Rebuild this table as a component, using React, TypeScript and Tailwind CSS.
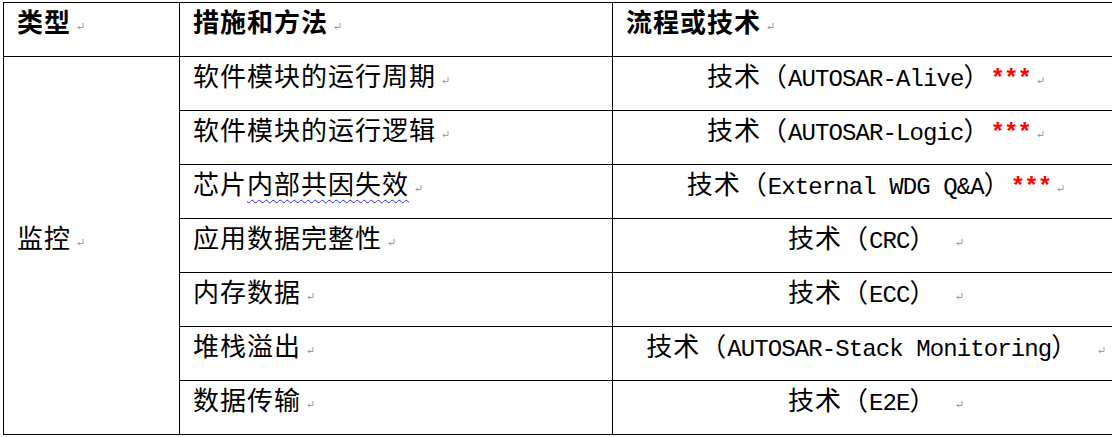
import React from 'react';

interface Row {
  measure: string;
  tech: string;
  stars?: boolean;
  wavyFrom?: number;
}

const ROWS: Row[] = [
  { measure: '软件模块的运行周期', tech: 'AUTOSAR-Alive', stars: true },
  { measure: '软件模块的运行逻辑', tech: 'AUTOSAR-Logic', stars: true },
  { measure: '芯片内部共因失效', tech: 'External WDG Q&A', stars: true, wavyFrom: 2 },
  { measure: '应用数据完整性', tech: 'CRC' },
  { measure: '内存数据', tech: 'ECC' },
  { measure: '堆栈溢出', tech: 'AUTOSAR-Stack Monitoring' },
  { measure: '数据传输', tech: 'E2E' },
];

// Word's paragraph mark
const Mark = () => (
  <svg width="7" height="7" viewBox="0 0 7 7" className="inline-block ml-[6px] align-[2px]" fill="none" stroke="#9a9a9a" strokeWidth="1">
    <path d="M6 0V4.5H1" />
    <path d="M2.8 2.7L1 4.5L2.8 6.3" />
  </svg>
);

const latin = "font-['Liberation_Mono',monospace] text-[24px] tracking-[-0.9px] whitespace-pre";

const cell = 'border-r border-b border-black';

export default function App() {
  return (
    <div className="w-[1112px] h-[437px] overflow-hidden bg-white pl-[3px] pt-[2px] text-black font-['Noto_Sans_CJK_SC',sans-serif] text-[26px] leading-[26px] tracking-[1px]">
      <div className="grid w-[1123px] grid-cols-[176px_433px_513px] grid-rows-[repeat(8,54px)] border-l border-t border-black">
        <div className={`${cell} pl-[13px] pt-[5px] font-bold`}>
          类型<Mark />
        </div>
        <div className={`${cell} pl-[13px] pt-[5px] font-bold`}>
          措施和方法<Mark />
        </div>
        <div className={`${cell} pl-[13px] pt-[5px] font-bold`}>
          流程或技术<Mark />
        </div>

        <div className={`${cell} row-span-7 flex items-center pl-[13px] pb-[18px]`}>
          <span>
            监控<Mark />
          </span>
        </div>

        {ROWS.map((r) => (
          <React.Fragment key={r.measure}>
            <div className={`${cell} pl-[13px] pt-[5px] whitespace-nowrap`}>
              {r.wavyFrom !== undefined ? (
                <>
                  {r.measure.slice(0, r.wavyFrom)}
                  <span className="underline decoration-wavy decoration-[#2b2bff] decoration-1 underline-offset-[5px]">
                    {r.measure.slice(r.wavyFrom)}
                  </span>
                </>
              ) : (
                r.measure
              )}
              <Mark />
            </div>
            <div className={`${cell} flex justify-center pt-[5px] whitespace-nowrap`}>
              <span>
                技术（<span className={latin}>{r.tech}</span>）
                {r.stars ? (
                  <span className={`${latin} font-bold text-[#ff0000]`}>***</span>
                ) : (
                  <span className={latin}> </span>
                )}
                <span className="inline-block w-0">
                  <Mark />
                </span>
              </span>
            </div>
          </React.Fragment>
        ))}
      </div>
    </div>
  );
}
